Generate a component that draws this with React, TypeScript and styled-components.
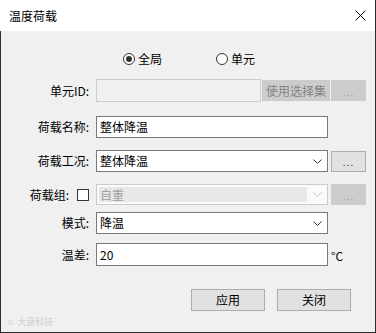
import React from "react";
import styled, { createGlobalStyle } from "styled-components";

const GlobalStyle = createGlobalStyle`
  html, body { margin: 0; padding: 0; background: #ffffff; }
  body {
    font-family: "Noto Sans CJK SC", "Noto Sans", "Liberation Sans", sans-serif;
    font-size: 12px;
    color: #000;
  }
  * { box-sizing: border-box; }
`;

const Window = styled.div`
  position: relative;
  width: 376px;
  height: 333px;
  display: flex;
  flex-direction: column;
  border-right: 1px solid #2e2e2e;
  border-bottom: 1px solid #2e2e2e;
`;

const TitleBar = styled.div`
  height: 31px;
  flex-shrink: 0;
  background: #ffffff;
  display: flex;
  align-items: center;
  justify-content: space-between;
  padding: 0 9px 0 9px;
  font-size: 12px;
  line-height: 14px;
`;

const Body = styled.div`
  flex: 1;
  background: #f0f0f0;
  border-left: 1px solid #2e2e2e;
  padding-top: 21px;
  display: flex;
  flex-direction: column;
`;

const RadioRow = styled.div`
  display: flex;
  align-items: center;
  height: 14px;
  padding-left: 122px;
  gap: 54px;
`;

const RadioOption = styled.label`
  display: flex;
  align-items: center;
  gap: 3px;
  font-size: 12px;
  line-height: 14px;
`;

const RadioDot = styled.span<{ $checked?: boolean }>`
  position: relative;
  width: 12px;
  height: 12px;
  border-radius: 50%;
  border: 1px solid #333333;
  background: #ffffff;
  &::after {
    content: "";
    display: ${(p) => (p.$checked ? "block" : "none")};
    position: absolute;
    left: 2px;
    top: 2px;
    width: 6px;
    height: 6px;
    border-radius: 50%;
    background: #333333;
  }
`;

const Row = styled.div<{ $mt: number; $h: number }>`
  display: flex;
  align-items: center;
  margin-top: ${(p) => p.$mt}px;
  height: ${(p) => p.$h}px;
`;

const Label = styled.div`
  width: 88px;
  margin-right: 7px;
  flex-shrink: 0;
  display: flex;
  align-items: center;
  justify-content: flex-end;
  gap: 8px;
  font-size: 12px;
  line-height: 14px;
`;

const Checkbox = styled.span`
  width: 12px;
  height: 12px;
  border: 1px solid #333333;
  background: #ffffff;
`;

const TextBox = styled.div<{ $w: number; $disabled?: boolean }>`
  width: ${(p) => p.$w}px;
  height: 100%;
  display: flex;
  align-items: center;
  padding: 0 3px;
  border: 1px solid ${(p) => (p.$disabled ? "#cccccc" : "#7a7a7a")};
  background: ${(p) => (p.$disabled ? "#f0f0f0" : "#ffffff")};
  font-size: 12px;
  line-height: 14px;
`;

const SelectBox = styled.div<{ $disabled?: boolean }>`
  width: 232px;
  height: 100%;
  display: flex;
  align-items: stretch;
  border: 1px solid ${(p) => (p.$disabled ? "#cccccc" : "#7a7a7a")};
  background: ${(p) => (p.$disabled ? "#fafafa" : "#ffffff")};
  padding: ${(p) => (p.$disabled ? "2px 0 2px 2px" : "0")};
`;

const SelectText = styled.div<{ $disabled?: boolean }>`
  flex: 1;
  display: flex;
  align-items: center;
  padding-left: ${(p) => (p.$disabled ? "1px" : "3px")};
  background: ${(p) => (p.$disabled ? "#e8e8e8" : "transparent")};
  color: ${(p) => (p.$disabled ? "#a0a0a0" : "#000000")};
  font-size: 12px;
  line-height: 14px;
`;

const ChevronCell = styled.div`
  width: 20px;
  display: flex;
  align-items: center;
  justify-content: center;
`;

const SideButton = styled.div<{ $w: number; $ml: number; $disabled?: boolean }>`
  width: ${(p) => p.$w}px;
  margin-left: ${(p) => p.$ml}px;
  height: 21px;
  display: flex;
  align-items: center;
  justify-content: center;
  border: 1px solid ${(p) => (p.$disabled ? "#cccccc" : "#adadad")};
  background: ${(p) => (p.$disabled ? "#cccccc" : "#e1e1e1")};
  color: ${(p) => (p.$disabled ? "#838383" : "#333333")};
  font-size: 12px;
  line-height: 14px;
`;

const Dots = styled.span<{ $disabled?: boolean }>`
  font-size: 10px;
  letter-spacing: 1px;
  color: ${(p) => (p.$disabled ? "#999999" : "#333333")};
  margin-top: 2px;
`;

const Unit = styled.span`
  margin-left: 3px;
  font-size: 12px;
  line-height: 14px;
  padding-top: 3px;
`;

const ButtonRow = styled.div`
  display: flex;
  justify-content: flex-end;
  gap: 12px;
  padding-right: 24px;
  margin-top: 23px;
`;

const DialogButton = styled.div`
  width: 74px;
  height: 22px;
  display: flex;
  align-items: center;
  justify-content: center;
  border: 1px solid #adadad;
  background: #e1e1e1;
  font-size: 12px;
  line-height: 14px;
`;

const Watermark = styled.div`
  position: absolute;
  left: 6px;
  bottom: 5px;
  display: flex;
  align-items: center;
  gap: 2px;
  font-size: 9px;
  line-height: 10px;
  color: #cfcfcf;
`;

const Chevron = ({ color }: { color: string }) => (
  <svg width="9" height="5" viewBox="0 0 9 5">
    <polyline points="0.5,0.5 4.5,4.5 8.5,0.5" fill="none" stroke={color} strokeWidth="1" />
  </svg>
);

const CloseIcon = () => (
  <svg width="11" height="11" viewBox="0 0 11 11">
    <line x1="0.5" y1="0.5" x2="10.5" y2="10.5" stroke="#000" strokeWidth="1" />
    <line x1="10.5" y1="0.5" x2="0.5" y2="10.5" stroke="#000" strokeWidth="1" />
  </svg>
);

export default function App() {
  return (
    <>
      <GlobalStyle />
      <Window>
        <TitleBar>
          <span>温度荷载</span>
          <CloseIcon />
        </TitleBar>
        <Body>
          <RadioRow>
            <RadioOption>
              <RadioDot $checked />
              全局
            </RadioOption>
            <RadioOption>
              <RadioDot />
              单元
            </RadioOption>
          </RadioRow>

          <Row $mt={13} $h={23}>
            <Label>单元ID:</Label>
            <TextBox $w={165} $disabled />
            <SideButton $w={68} $ml={1} $disabled>使用选择集</SideButton>
            <SideButton $w={35} $ml={1} $disabled>
              <Dots $disabled>...</Dots>
            </SideButton>
          </Row>

          <Row $mt={14} $h={22}>
            <Label>荷载名称:</Label>
            <TextBox $w={232}>整体降温</TextBox>
          </Row>

          <Row $mt={12} $h={22}>
            <Label>荷载工况:</Label>
            <SelectBox>
              <SelectText>整体降温</SelectText>
              <ChevronCell>
                <Chevron color="#333333" />
              </ChevronCell>
            </SelectBox>
            <SideButton $w={35} $ml={3}>
              <Dots>...</Dots>
            </SideButton>
          </Row>

          <Row $mt={12} $h={21}>
            <Label>
              荷载组:
              <Checkbox />
            </Label>
            <SelectBox $disabled>
              <SelectText $disabled>自重</SelectText>
              <ChevronCell>
                <Chevron color="#c4c4c4" />
              </ChevronCell>
            </SelectBox>
            <SideButton $w={35} $ml={3} $disabled>
              <Dots $disabled>...</Dots>
            </SideButton>
          </Row>

          <Row $mt={7} $h={22}>
            <Label>模式:</Label>
            <SelectBox>
              <SelectText>降温</SelectText>
              <ChevronCell>
                <Chevron color="#333333" />
              </ChevronCell>
            </SelectBox>
          </Row>

          <Row $mt={9} $h={23}>
            <Label>温差:</Label>
            <TextBox $w={232}>20</TextBox>
            <Unit>°C</Unit>
          </Row>

          <ButtonRow>
            <DialogButton>应用</DialogButton>
            <DialogButton>关闭</DialogButton>
          </ButtonRow>
        </Body>
        <Watermark>
          <span>☺</span>
          <span>大盘科技</span>
        </Watermark>
      </Window>
    </>
  );
}
